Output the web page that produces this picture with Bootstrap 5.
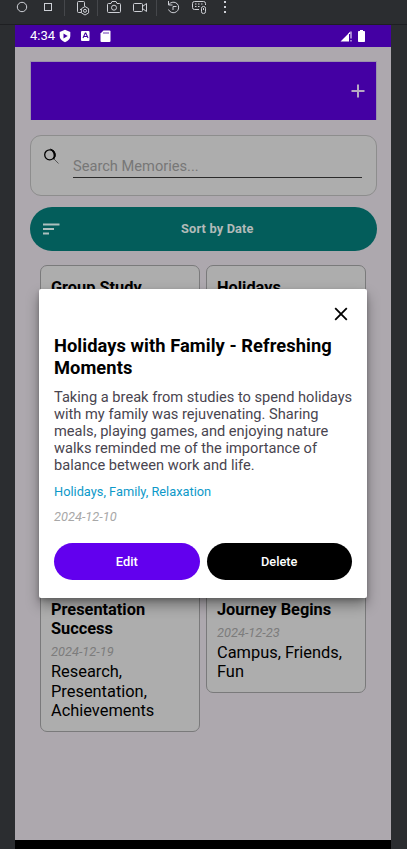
<!DOCTYPE html>
<html lang="en">
<head>
<meta charset="utf-8">
<meta name="viewport" content="width=device-width, initial-scale=1">
<title>Memories</title>
<link href="https://cdn.jsdelivr.net/npm/bootstrap@5.3.0/dist/css/bootstrap.min.css" rel="stylesheet">
<style>
body{background:#2b2d30;font-family:Roboto,"Noto Sans",sans-serif;height:849px;overflow:hidden;color:#000}
svg{display:block;flex:none}
.toolstrip{height:25px;border-bottom:1px solid #1e1f22}
.phone{width:376px;height:824px;margin-left:15px;background:#ada8ae}
.status{height:22px;background:#4400a3;color:#fff;font-size:13px;line-height:22px;padding:0 25px 0 15px}
.status-icons{margin-left:3px}
.screen{padding:14px 14.4px 0 14.6px}
.hero{height:59px;background:#4400a3;border:1px solid #9a91ac;border-bottom:0;padding-right:11px}
.finder{height:61px;margin-top:15px;border:1px solid #8d8d8d;border-radius:11px;background:#adadad;padding:11px 14px 0 11px}
.finder-input{margin-left:13.400px;margin-top:8px;height:23px;border-bottom:1px solid #2b2b2b;color:#777;font-size:14.63px;line-height:22px}
.sorter{height:44px;margin-top:11px;border-radius:22px;background:#035d5b;color:#b2bab9;font-size:12.8px;letter-spacing:.15px;font-weight:700;padding-left:12.500px}
.sorter-text{padding-right:2px}
.memories{margin:14px 10px 0 10.400px;gap:6px}
.memory{width:160px;border:1px solid #7a7a7b;border-radius:7px;background:#adadad;padding:12.500px 10px 10.500px;font-size:16.4px;line-height:19.2px}
.memory h2{font-size:16.35px;line-height:19.2px;font-weight:700;margin:0}
.memory time{display:block;color:#7c7c7c;font-size:12.8px;line-height:15px;font-style:italic;margin:6px 0 3.500px}
.first-memory{height:313px;padding-top:12px}
.detail{left:24px;top:264px;width:328px;height:309px;background:#fff;border-radius:2px;padding:18px 15px 0;box-shadow:0 7px 13px rgba(0,0,0,.36),0 2px 4px rgba(0,0,0,.2)}
.detail h1{font-size:18.3px;letter-spacing:.07px;line-height:21.5px;font-weight:700;margin:14px 0 10.5px}
.detail p{font-size:14.63px;line-height:17.1px;color:#49454f;margin:0;white-space:nowrap}
.tags{font-size:12.8px;line-height:15px;color:#0d99c9;margin-top:10px}
.when{font-size:12.8px;line-height:15px;color:#a8a8a8;font-style:italic;margin-top:10px}
.actions{margin-top:19px;gap:7px}
.actions .btn{height:37px;padding:0;border:0;font-size:12.8px;font-weight:500;color:#fff}
.edit{background:#6200ee}
.remove{background:#000}
.homebar{bottom:0;height:9px;background:#000}
</style>
<script src="https://cdn.jsdelivr.net/npm/bootstrap@5.3.0/dist/js/bootstrap.bundle.min.js"></script>
</head>
<body>
<header class="toolstrip">
<svg width="407" height="24" fill="none" stroke="#ced0d6">
<circle cx="22" cy="7" r="4.7"/><rect x="44.5" y="3.5" width="7" height="7"/>
<path d="M64.5 0v16M97.5 0v16M156.500 0v16" stroke="#45474b"/>
<path d="M81 12.500h-2.500q-1 0-1-1v-9q0-1 1-1h5q1 0 1 1V6M80 9.500h1"/>
<path d="M85 6.500l3.600 2.200v4.200L85 15l-3.600-2.100V8.700z"/><circle cx="85" cy="10.800" r="1.500"/>
<path d="M108.500 3.500h2.500l1-2h4l1 2h2.500q1 0 1 1v7q0 1-1 1h-11q-1 0-1-1v-7q0-1 1-1z"/><circle cx="114" cy="7.700" r="2.500"/>
<rect x="133.500" y="3.500" width="9" height="8" rx="1"/><path d="M142.500 6.500l4-3v8l-4-3"/>
<path d="M168.500 1v4h4M169 4.500a5.300 5.300 0 1 1-.5 5M176.500 6.500H173V10"/>
<path d="M199 9.500h-4.500q-2 0-2-2v-4q0-2 2-2h9q2 0 2 2V5M195 4h1.500M198 4h1.500M201 4h1.500M195 6.500h1.500M198 6.500h1.500"/><rect x="201.500" y="6.500" width="4" height="7" rx="1.800"/><path d="M203.500 8v2"/>
<g fill="#ced0d6" stroke="none"><rect x="224" y="1" width="2" height="2"/><rect x="224" y="6" width="2" height="2"/><rect x="224" y="11" width="2" height="2"/></g>
</svg>
</header>
<main class="phone position-relative">
<div class="status d-flex align-items-center">
<span>4:34</span>
<svg class="status-icons" width="54" height="14" viewBox="0 0 54 14"><path d="M7 .8l5.300 2.200v4q0 4-5.300 6.200Q1.700 11 1.700 7V3z" fill="#fff"/><path d="M5.500 4.500L9.700 7l-4.200 2.500z" fill="#4400a3"/><rect x="23" y="2" width="8.500" height="10" rx="1" fill="#fff"/><path d="M25 9l2.300-5h.5L30 9M26 7.500h3" fill="none" stroke="#4400a3" stroke-width="1.100"/><path d="M42.500 4.500l3-3h6q1 0 1 1v9.500q0 1-1 1h-8q-1 0-1-1z" fill="#fff"/><path d="M46 3v2M48 3v2M50 3v2" stroke="#4400a3" stroke-width=".8"/></svg>
<svg class="ms-auto" width="27" height="14" viewBox="0 0 27 14"><path d="M1.500 12.500L10 4v8.500zM11.500 2.500h1v7h-1zM11.500 11h1v1.500h-1z" fill="#fff"/><path d="M9.500 4.500l1.700-2V5H9.500z" fill="#fff"/><rect x="19" y="2" width="7" height="11" rx=".8" fill="#fff"/><path d="M21 1h3v2h-3z" fill="#fff"/></svg>
</div>
<div class="screen">
<div class="hero d-flex align-items-center justify-content-end"><svg width="14" height="14"><path d="M7 .5v13M.5 7h13" stroke="#b7a9c2" stroke-width="2"/></svg></div>
<div class="finder d-flex align-items-start">
<svg width="18" height="18" viewBox="0 0 18 18"><circle cx="7.700" cy="7.800" r="5" fill="none" stroke="#000" stroke-width="1.300"/><path d="M8.500 2.200a5.800 5.800 0 0 1 3 10 8 8 0 0 0-3-10z" fill="#000" stroke="#000" stroke-width=".9"/><path d="M12 12l4.500 4.500" stroke="#555" stroke-width="1"/></svg>
<div class="finder-input flex-grow-1">Search Memories...</div>
</div>
<div class="sorter d-flex align-items-center">
<svg width="18" height="14"><path d="M1 2.500h16.500M1 7h11M1 11.500h6" stroke="#adc0be" stroke-width="2"/></svg>
<span class="sorter-text flex-grow-1 text-center">Sort by Date</span>
</div>
<div class="memories d-flex align-items-start">
<section class="d-flex flex-column gap-2">
<article class="memory first-memory"><h2>Group Study</h2></article>
<article class="memory"><h2>Presentation Success</h2><time>2024-12-19</time>Research, Presentation, Achievements</article>
</section>
<section class="d-flex flex-column gap-2">
<article class="memory first-memory"><h2>Holidays</h2></article>
<article class="memory"><h2>Journey Begins</h2><time>2024-12-23</time>Campus, Friends, Fun</article>
</section>
</div>
</div>
<section class="detail position-absolute">
<div class="d-flex justify-content-end pe-1"><svg width="14" height="14"><path d="M1.200 1.200l11.600 11.600M12.800 1.200L1.200 12.800" stroke="#000" stroke-width="1.800"/></svg></div>
<h1>Holidays with Family - Refreshing<br>Moments</h1>
<p>Taking a break from studies to spend holidays<br>with my family was rejuvenating. Sharing<br>meals, playing games, and enjoying nature<br>walks reminded me of the importance of<br>balance between work and life.</p>
<div class="tags">Holidays, Family, Relaxation</div>
<div class="when">2024-12-10</div>
<div class="actions d-flex"><button class="btn edit rounded-pill flex-fill w-50">Edit</button><button class="btn remove rounded-pill flex-fill w-50">Delete</button></div>
</section>
<div class="homebar position-absolute w-100"></div>
</main>
</body>
</html>
